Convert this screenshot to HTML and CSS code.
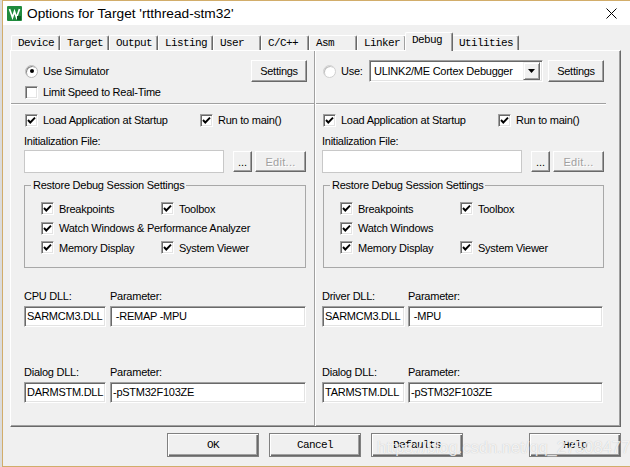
FILE: index.html
```html
<!DOCTYPE html>
<html>
<head>
<meta charset="utf-8">
<title>Options for Target</title>
<link rel="stylesheet" href="styles.css">
</head>
<body>
<div class="window">
  <div class="titlebar">
    <svg class="appicon" viewBox="0 0 15 15"><rect width="15" height="15" rx="1" fill="#1f8b3d"/><path d="M2.5 3 L5.5 11.5 L7.5 5.5 L9.5 11.5 L12.5 3" stroke="#fff" stroke-width="1.7" fill="none"/><rect x="10" y="10" width="4" height="4" fill="#0f5a24"/></svg>
    <span class="title">Options for Target 'rtthread-stm32'</span>
    <svg class="close" viewBox="0 0 11 11"><path d="M0.5 0.5 L10.5 10.5 M10.5 0.5 L0.5 10.5" stroke="#000" stroke-width="1"/></svg>
  </div>
  <div class="client">
    <div class="tabs">
      <div class="tab">Device</div>
      <div class="tab">Target</div>
      <div class="tab">Output</div>
      <div class="tab">Listing</div>
      <div class="tab">User</div>
      <div class="tab">C/C++</div>
      <div class="tab">Asm</div>
      <div class="tab">Linker</div>
      <div class="tab active">Debug</div>
      <div class="tab">Utilities</div>
    </div>
    <div class="panel">
      <div class="col col-left">
        <div class="row-top">
          <span class="opt"><span class="rb checked"></span>Use Simulator</span>
          <button class="btn settings push-right">Settings</button>
        </div>
        <div class="row-limit">
          <span class="opt"><span class="cb"></span>Limit Speed to Real-Time</span>
        </div>
        <div class="sep sep-left"></div>
        <div class="row-load">
          <span class="opt"><span class="cb"><svg viewBox="0 0 11 11"><path d="M2 5 L4.3 7.5 L9 2.7" stroke="#000" stroke-width="1.9" fill="none"/></svg></span>Load Application at Startup</span>
          <span class="opt"><span class="cb"><svg viewBox="0 0 11 11"><path d="M2 5 L4.3 7.5 L9 2.7" stroke="#000" stroke-width="1.9" fill="none"/></svg></span>Run to main()</span>
        </div>
        <div class="lbl">Initialization File:</div>
        <div class="row-init">
          <div class="field-init"></div>
          <button class="btn dots">...</button>
          <button class="btn edit">Edit...</button>
        </div>
        <fieldset class="group">
          <legend>Restore Debug Session Settings</legend>
          <div class="group-grid">
            <span class="opt"><span class="cb"><svg viewBox="0 0 11 11"><path d="M2 5 L4.3 7.5 L9 2.7" stroke="#000" stroke-width="1.9" fill="none"/></svg></span>Breakpoints</span>
            <span class="opt"><span class="cb"><svg viewBox="0 0 11 11"><path d="M2 5 L4.3 7.5 L9 2.7" stroke="#000" stroke-width="1.9" fill="none"/></svg></span>Toolbox</span>
            <span class="opt span2"><span class="cb"><svg viewBox="0 0 11 11"><path d="M2 5 L4.3 7.5 L9 2.7" stroke="#000" stroke-width="1.9" fill="none"/></svg></span>Watch Windows &amp; Performance Analyzer</span>
            <span class="opt"><span class="cb"><svg viewBox="0 0 11 11"><path d="M2 5 L4.3 7.5 L9 2.7" stroke="#000" stroke-width="1.9" fill="none"/></svg></span>Memory Display</span>
            <span class="opt"><span class="cb"><svg viewBox="0 0 11 11"><path d="M2 5 L4.3 7.5 L9 2.7" stroke="#000" stroke-width="1.9" fill="none"/></svg></span>System Viewer</span>
          </div>
        </fieldset>
        <div class="dll dll-first">
          <span class="lbl">CPU DLL:</span>
          <span class="lbl">Parameter:</span>
          <div class="field">SARMCM3.DLL</div>
          <div class="field"> -REMAP -MPU</div>
        </div>
        <div class="dll dll-second">
          <span class="lbl">Dialog DLL:</span>
          <span class="lbl">Parameter:</span>
          <div class="field">DARMSTM.DLL</div>
          <div class="field">-pSTM32F103ZE</div>
        </div>
      </div>
      <div class="col col-right">
        <div class="row-top">
          <span class="opt use"><span class="rb"></span>Use:</span>
          <div class="select">
            <span class="select-text">ULINK2/ME Cortex Debugger</span>
            <span class="drop"><svg viewBox="0 0 7 4"><path d="M0 0 H7 L3.5 4 Z" fill="#000"/></svg></span>
          </div>
          <button class="btn settings">Settings</button>
        </div>
        <div class="row-limit"></div>
        <div class="sep sep-right"></div>
        <div class="row-load">
          <span class="opt"><span class="cb"><svg viewBox="0 0 11 11"><path d="M2 5 L4.3 7.5 L9 2.7" stroke="#000" stroke-width="1.9" fill="none"/></svg></span>Load Application at Startup</span>
          <span class="opt"><span class="cb"><svg viewBox="0 0 11 11"><path d="M2 5 L4.3 7.5 L9 2.7" stroke="#000" stroke-width="1.9" fill="none"/></svg></span>Run to main()</span>
        </div>
        <div class="lbl">Initialization File:</div>
        <div class="row-init">
          <div class="field-init"></div>
          <button class="btn dots">...</button>
          <button class="btn edit">Edit...</button>
        </div>
        <fieldset class="group">
          <legend>Restore Debug Session Settings</legend>
          <div class="group-grid">
            <span class="opt"><span class="cb"><svg viewBox="0 0 11 11"><path d="M2 5 L4.3 7.5 L9 2.7" stroke="#000" stroke-width="1.9" fill="none"/></svg></span>Breakpoints</span>
            <span class="opt"><span class="cb"><svg viewBox="0 0 11 11"><path d="M2 5 L4.3 7.5 L9 2.7" stroke="#000" stroke-width="1.9" fill="none"/></svg></span>Toolbox</span>
            <span class="opt span2"><span class="cb"><svg viewBox="0 0 11 11"><path d="M2 5 L4.3 7.5 L9 2.7" stroke="#000" stroke-width="1.9" fill="none"/></svg></span>Watch Windows</span>
            <span class="opt"><span class="cb"><svg viewBox="0 0 11 11"><path d="M2 5 L4.3 7.5 L9 2.7" stroke="#000" stroke-width="1.9" fill="none"/></svg></span>Memory Display</span>
            <span class="opt"><span class="cb"><svg viewBox="0 0 11 11"><path d="M2 5 L4.3 7.5 L9 2.7" stroke="#000" stroke-width="1.9" fill="none"/></svg></span>System Viewer</span>
          </div>
        </fieldset>
        <div class="dll dll-first">
          <span class="lbl">Driver DLL:</span>
          <span class="lbl">Parameter:</span>
          <div class="field">SARMCM3.DLL</div>
          <div class="field"> -MPU</div>
        </div>
        <div class="dll dll-second">
          <span class="lbl">Dialog DLL:</span>
          <span class="lbl">Parameter:</span>
          <div class="field">TARMSTM.DLL</div>
          <div class="field">-pSTM32F103ZE</div>
        </div>
      </div>
    </div>
    <div class="buttons">
      <button class="btn dlg">OK</button>
      <button class="btn dlg">Cancel</button>
      <button class="btn dlg">Defaults</button>
      <button class="btn dlg help">Help</button>
    </div>
  </div>
  <div class="watermark">https://blog.csdn.net/qq_27508477</div>
</div>
</body>
</html>
```

FILE: styles.css
```css
* { box-sizing: border-box; }
html, body { margin: 0; padding: 0; }
body {
  width: 630px;
  height: 467px;
  overflow: hidden;
  background: #dcdcdc;
  font-family: "Liberation Sans", Arial, sans-serif;
  font-size: 11px;
  letter-spacing: -0.25px;
  color: #000;
}
.window {
  position: relative;
  margin-left: 2px;
  width: 628px;
  height: 467px;
  border-top: 1px solid #d2ad6a;
  border-left: 1px solid #d2ad6a;
  border-bottom: 1px solid #d2ad6a;
  background: #f0f0f0;
  display: flex;
  flex-direction: column;
  overflow: hidden;
}
.titlebar {
  flex: none;
  height: 24px;
  background: #fff;
  display: flex;
  align-items: center;
  padding-left: 4px;
}
.appicon { width: 15px; height: 15px; flex: none; }
.title {
  margin-left: 5px;
  font-size: 13.7px;
  letter-spacing: 0;
  color: #000;
}
.close { margin-left: auto; margin-right: 13px; width: 11px; height: 11px; }

.client { flex: 1; padding: 7px 0 0 7px; }

.tabs {
  display: flex;
  align-items: flex-end;
  height: 18px;
  margin-left: 1px;
  position: relative;
  z-index: 1;
}
.tab {
  height: 15px;
  min-width: 48px;
  padding: 0 5px 0 6px;
  font-family: "Liberation Mono", monospace;
  font-size: 11px;
  letter-spacing: -0.6px;
  line-height: 15px;
  border-top: 1px solid #fff;
  border-left: 1px solid #fff;
  border-right: 1px solid #696969;
  box-shadow: inset -1px 0 #a0a0a0;
  border-radius: 2px 2px 0 0;
  background: #f0f0f0;
}
.tab.active {
  height: 19px;
  margin: 0 -1px -1px -1px;
  line-height: 15px;
  position: relative;
}

.panel {
  width: 611px;
  height: 377px;
  border-top: 1px solid #fff;
  border-left: 1px solid #fff;
  border-right: 1px solid #696969;
  border-bottom: 1px solid #696969;
  box-shadow: inset -1px -1px #a0a0a0;
  display: grid;
  grid-template-columns: 304px 305px;
}
.col { display: flex; flex-direction: column; }
.col-left { padding: 9px 7px 0 13px; border-right: 1px solid #a0a0a0; }
.col-right { padding: 9px 16px 0 6px; border-left: 1px solid #fff; }

.opt { display: flex; align-items: center; gap: 5px; white-space: nowrap; }
.row-top { height: 22px; display: flex; align-items: center; }
.row-top .opt { margin-left: 1px; }
.row-limit { height: 20px; display: flex; align-items: center; padding-left: 1px; }
.sep { height: 2px; border-top: 1px solid #a0a0a0; border-bottom: 1px solid #fff; margin-top: 1px; }
.sep-left { margin-left: -13px; margin-right: -7px; }
.sep-right { margin-left: -6px; margin-right: -2px; }
.row-load {
  margin-top: 5px;
  height: 20px;
  display: grid;
  grid-template-columns: 175px auto;
  align-items: center;
  padding-left: 1px;
}
.lbl { display: block; line-height: 14px; height: 14px; white-space: nowrap; }
.col > .lbl { margin-top: 4px; }

.rb {
  width: 13px; height: 13px;
  border-radius: 50%;
  background: #fff;
  border: 1px solid #b8b8b8;
  box-shadow: inset 1px 1px #8a8a8a;
  display: flex; align-items: center; justify-content: center;
  flex: none;
}
.rb.checked::after {
  content: "";
  width: 4px; height: 4px;
  border-radius: 50%;
  background: #000;
}
.col-right .rb { border-color: #d0d0d0; box-shadow: inset 1px 1px #c0c0c0; }
.cb {
  width: 13px; height: 13px;
  background: #fff;
  border: 1px solid;
  border-color: #a0a0a0 #fff #fff #a0a0a0;
  box-shadow: inset 1px 1px #696969, inset -1px -1px #e3e3e3;
  flex: none;
  display: flex; align-items: center; justify-content: center;
}
.cb svg { width: 11px; height: 11px; }

.btn {
  font-family: "Liberation Sans", Arial, sans-serif;
  font-size: 11px;
  letter-spacing: -0.25px;
  color: #000;
  background: #f0f0f0;
  border: 1px solid;
  border-color: #fff #696969 #696969 #fff;
  box-shadow: inset -1px -1px #a0a0a0;
  padding: 0;
  height: 22px;
}
.settings { width: 56px; }
.push-right { margin-left: auto; }
.use { width: 46px; }
.select {
  width: 174px;
  height: 22px;
  background: #fff;
  border: 1px solid;
  border-color: #a0a0a0 #fff #fff #a0a0a0;
  box-shadow: inset 1px 1px #696969, inset -1px -1px #e3e3e3;
  display: flex;
  align-items: center;
  padding: 2px 2px 2px 4px;
  margin-right: 5px;
}
.select-text { flex: 1; white-space: nowrap; }
.drop {
  width: 17px;
  height: 18px;
  background: #f0f0f0;
  border: 1px solid;
  border-color: #f0f0f0 #696969 #696969 #f0f0f0;
  box-shadow: inset 1px 1px #fff, inset -1px -1px #a0a0a0;
  display: flex; align-items: center; justify-content: center;
}
.drop svg { width: 7px; height: 4px; }

.row-init { margin-top: 2px; height: 23px; display: flex; align-items: center; }
.field-init {
  width: 200px;
  height: 23px;
  background: #fff;
  border: 1px solid #c8c8c8;
}
.dots { width: 19px; height: 21px; margin-left: 9px; letter-spacing: 0; }
.edit { width: 51px; height: 21px; margin-left: 3px; color: #a0a0a0; text-shadow: 1px 1px 0 #fff; letter-spacing: 0.3px; }

.group {
  margin: 5px 0 0 0;
  width: 282px;
  height: 90px;
  padding: 0;
  border: 1px solid #a8a8a8;
  min-width: 0;
}
.col-right .group { width: 281px; margin-left: 1px; }
.group legend {
  margin-left: 6px;
  padding: 0 2px;
  line-height: 14px;
}
.group-grid {
  padding: 7px 0 0 16px;
  display: grid;
  grid-template-columns: 120px auto;
  grid-auto-rows: 19.5px;
  align-items: center;
}
.span2 { grid-column: 1 / 3; }

.dll {
  display: grid;
  grid-template-columns: 82px 196px;
  grid-template-rows: 14px 21px;
  column-gap: 4px;
  row-gap: 3px;
}
.col-right .dll { grid-template-columns: 83px 195px; column-gap: 3px; }
.dll-first { margin-top: 21px; }
.dll-second { margin-top: 38px; }
.field {
  height: 21px;
  background: #fff;
  border: 1px solid;
  border-color: #a0a0a0 #fff #fff #a0a0a0;
  box-shadow: inset 1px 1px #696969, inset -1px -1px #e3e3e3;
  padding: 0 2px 0 2px;
  line-height: 19px;
  white-space: pre;
  overflow: hidden;
}

.buttons {
  margin-top: 6px;
  display: flex;
  gap: 10px;
  padding-left: 157px;
}
.btn.dlg {
  width: 92px;
  height: 24px;
  font-family: "Liberation Mono", monospace;
  font-size: 11px;
  letter-spacing: -0.6px;
  border: 1px solid #808080;
  box-shadow: inset 1px 1px #fff, inset -1px -1px #696969, inset -2px -2px #a0a0a0;
}
.help { margin-left: 56px; }

.watermark {
  position: absolute;
  left: 374px;
  top: 436px;
  font-size: 16.5px;
  line-height: 20px;
  letter-spacing: 0;
  color: rgba(255, 255, 255, 0.8);
  text-shadow: 0 0 1px rgba(90, 90, 90, 0.35);
  white-space: nowrap;
  pointer-events: none;
}
```
